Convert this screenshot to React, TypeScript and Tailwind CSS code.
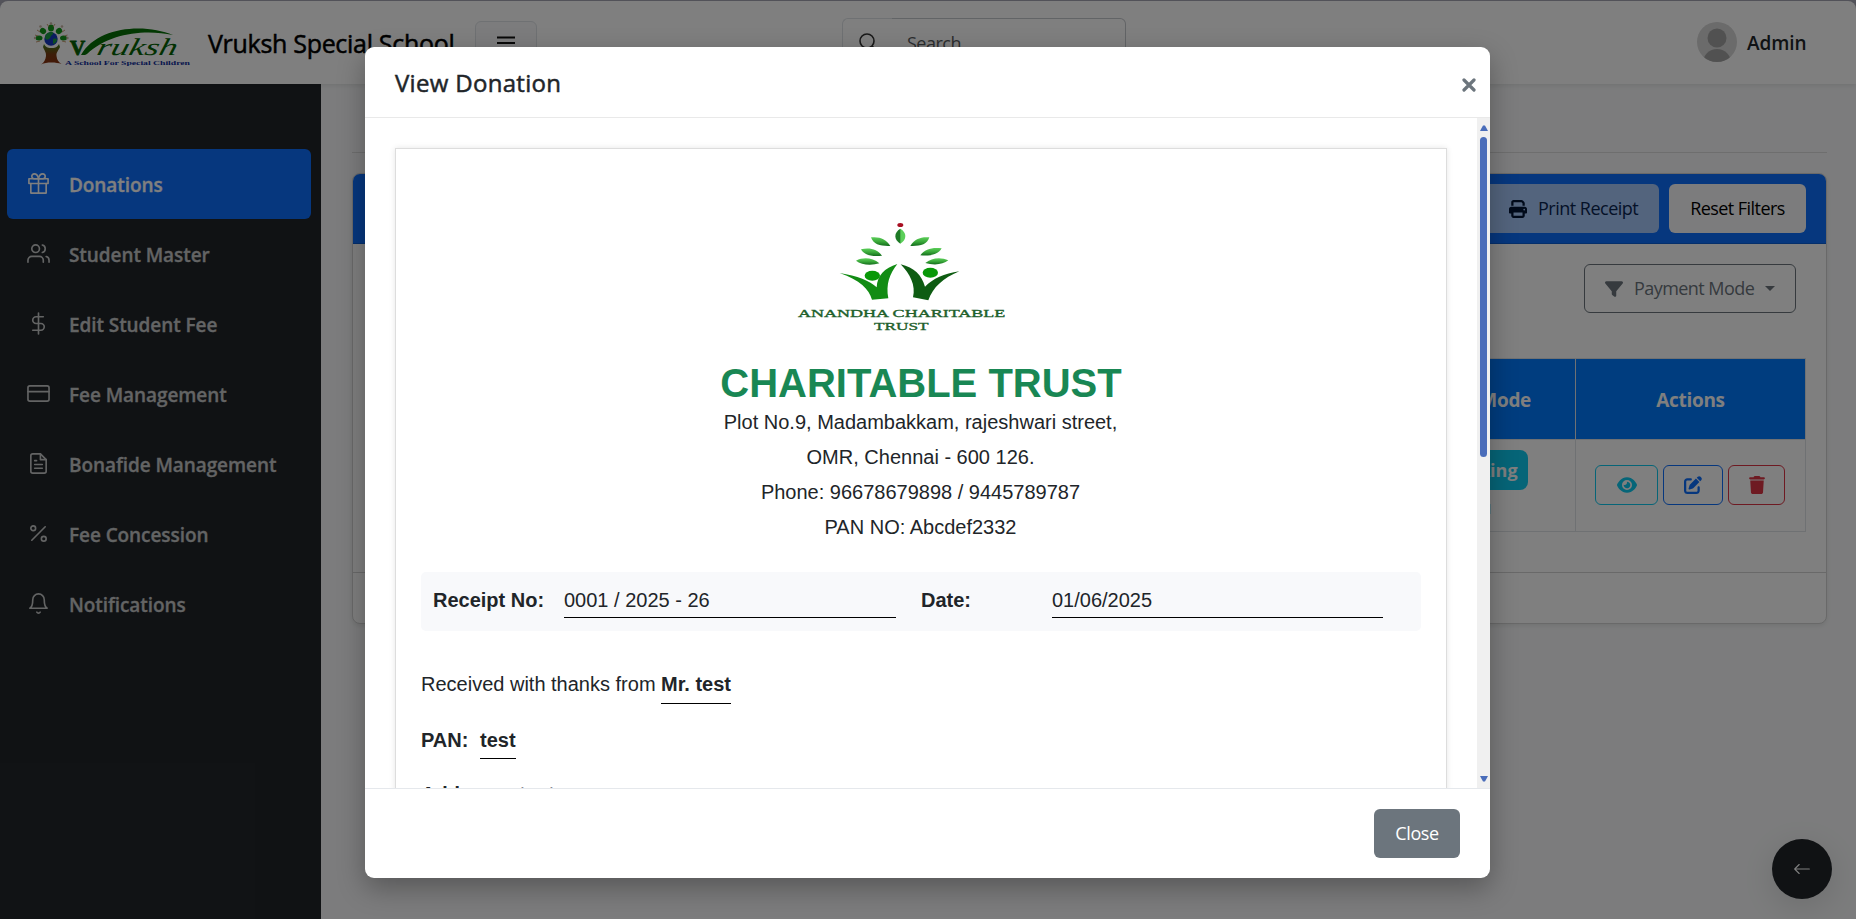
import React from "react";
import { FiGift, FiUsers, FiDollarSign, FiCreditCard, FiFileText, FiPercent, FiBell } from "react-icons/fi";
import { FaPrint, FaEye, FaPenToSquare, FaTrash, FaFilter } from "react-icons/fa6";
import { BsArrowLeft } from "react-icons/bs";

const navItems = [
  { label: "Donations", Icon: FiGift },
  { label: "Student Master", Icon: FiUsers },
  { label: "Edit Student Fee", Icon: FiDollarSign },
  { label: "Fee Management", Icon: FiCreditCard },
  { label: "Bonafide Management", Icon: FiFileText },
  { label: "Fee Concession", Icon: FiPercent },
  { label: "Notifications", Icon: FiBell },
];

function SchoolLogo() {
  return (
    <svg width="160" height="50" viewBox="0 0 160 50" className="shrink-0">
      <defs>
        <linearGradient id="trunk" x1="0" y1="0" x2="0" y2="1">
          <stop offset="0" stopColor="#3f7d1c" />
          <stop offset="0.5" stopColor="#7a3c12" />
          <stop offset="1" stopColor="#8a2f10" />
        </linearGradient>
      </defs>
      <path d="M11 24c2 4 5 4 7.500 4s5.500 0 7.500-4l1 3c-1 3-4 5-3.500 9 .5 4 2 6 5 8-3-1-6-1.500-10-1.500S11 43 8 44.500c3-2 4.500-4.500 5-8.500.4-4-2-6-3-9z" fill="url(#trunk)" />
      <g fill="#12961a">
        <ellipse cx="18" cy="8" rx="3" ry="3.600" />
        <ellipse cx="10" cy="11" rx="3.300" ry="2.800" transform="rotate(40 10 11)" />
        <ellipse cx="26" cy="11" rx="3.300" ry="2.800" transform="rotate(-40 26 11)" />
        <ellipse cx="6" cy="18" rx="3.500" ry="2.500" />
        <ellipse cx="30.500" cy="18" rx="3.500" ry="2.500" />
      </g>
      <g stroke="#b98150" strokeWidth="0.8" fill="none">
        <path d="m14 4 2 3M22 4l-2 3M4 10l3 2M32 10l-3 2M2 15l3 1M34.500 15l-3 1M3 22l4-1M33 22l-4-1" />
      </g>
      <g fill="#c9b6a5">
        <circle cx="18" cy="3.500" r="1.300" />
        <circle cx="7.500" cy="6.500" r="1.300" />
        <circle cx="29" cy="6.500" r="1.300" />
        <circle cx="2" cy="18" r="1.200" />
        <circle cx="34.500" cy="18" r="1.200" />
      </g>
      <circle cx="18" cy="19" r="6.700" fill="#1438c0" />
      <path d="M12 18c0-4 3-6 6-6s3 2 1 3-1 3-3 4-3 1-4-1zM20 19c3-1 4 0 4 1s-2 4-4 4z" fill="#1a9a45" />
      <path d="M48 35C64 6 112 3 140 15 112 9 76 13 54 34l-2 1z" fill="#067006" />
      <text x="37" y="35" fontFamily="Liberation Serif, serif" fontWeight="700" fontSize="21" fill="#056305" stroke="#056305" strokeWidth="0.8">V</text>
      <text x="63" y="35" textLength="80" lengthAdjust="spacingAndGlyphs" transform="translate(8.500 0) skewX(-14)" fontFamily="Liberation Serif, serif" fontStyle="italic" fontSize="24" fill="#056305">ruksh</text>
      <text x="32" y="45" textLength="125" lengthAdjust="spacingAndGlyphs" fontFamily="Liberation Serif, serif" fontWeight="700" fontSize="6.500" fill="#12309c">A School For Special Children</text>
    </svg>
  );
}

function TrustLogo() {
  return (
    <svg width="240" height="140" viewBox="0 0 720 420" className="mr-[42px]">
      <defs>
        <linearGradient id="leaf" x1="0" y1="0" x2="0" y2="1">
          <stop offset="0" stopColor="#5ccf5a" />
          <stop offset="0.5" stopColor="#3aa83a" />
          <stop offset="1" stopColor="#136b1c" />
        </linearGradient>
        <linearGradient id="bud" x1="0" y1="0" x2="1" y2="0">
          <stop offset="0.45" stopColor="#1d7a26" />
          <stop offset="0.55" stopColor="#5ccf5a" />
        </linearGradient>
      </defs>
      <ellipse cx="361" cy="75" rx="9" ry="6" fill="#a80f22" />
      <path d="M361 86c-20 12-20 32 0 45 20-13 20-33 0-45z" fill="url(#bud)" />
      <g fill="url(#leaf)">
        <path d="M273 112c26-3 46 5 58 26-28 1-51-4-58-26z" />
        <path d="M448 112c-26-2-45 5-57 26 28 1 51-4 57-26z" />
        <path d="M243 148c26-7 49 0 63 19-27 4-54-1-63-19z" />
        <path d="M485 145c-27-4-51 2-64 21 28 3 55-2 64-21z" />
        <path d="M228 182c24-12 50-8 70 8-22 7-54 6-70-8z" />
        <path d="M505 181c-22-10-50-8-69 8 23 7 53 6 69-8z" />
      </g>
      <ellipse cx="277" cy="227" rx="23" ry="15" fill="#089808" />
      <ellipse cx="451" cy="218" rx="23" ry="15" fill="#089808" />
      <path d="M179 219c53 9 91 23 111 43 2-36 23-57 62-70-23 29-35 61-27 103l-49 4c-9-32-36-58-97-80z" fill="#128c14" />
      <path d="M362 193c41 10 63 32 73 67 24-24 57-39 103-46-49 20-79 48-93 87l-46-9c9-36-9-70-37-99z" fill="#0e5c12" />
      <text x="54" y="350" textLength="622" lengthAdjust="spacingAndGlyphs" fontFamily="Liberation Serif, serif" fontSize="34" fill="#21602b" stroke="#21602b" strokeWidth="1">ANANDHA CHARITABLE</text>
      <text x="282" y="391" textLength="164" lengthAdjust="spacingAndGlyphs" fontFamily="Liberation Serif, serif" fontSize="34" fill="#21602b" stroke="#21602b" strokeWidth="1">TRUST</text>
    </svg>
  );
}

function TopBar() {
  return (
    <header className="relative z-10 mt-px flex h-[83px] shrink-0 items-start rounded-t-lg bg-white shadow-[0_2px_4px_rgba(0,0,0,0.08)]">
      <div className="ml-[33px] mt-[19px]">
        <SchoolLogo />
      </div>
      <div className="ml-[15px] mt-[24px] w-[267px] text-[25px] leading-[36px] tracking-[-0.3px] whitespace-nowrap text-black [-webkit-text-stroke:0.5px_#000]">
        Vruksh Special School
      </div>
      <button className="mt-5 flex h-[46px] w-[62px] justify-center rounded-md border border-[#dee2e6] bg-[#f8f9fa] pt-[14px]">
        <svg width="18" height="14" viewBox="0 0 18 14">
          <path d="M0 1.500h18M0 7h18M0 12.500h18" stroke="#111" strokeWidth="2" />
        </svg>
      </button>
      <div className="ml-[305px] mt-[17px] flex h-[49px] w-[284px]">
        <div className="flex w-[50px] items-center rounded-l-md border border-r-0 border-[#dee2e6] pl-4">
          <svg width="20" height="20" viewBox="0 0 20 20" fill="none" stroke="#333" strokeWidth="1.600">
            <circle cx="8" cy="8" r="7" />
            <path d="m13 13 6 6" />
          </svg>
        </div>
        <div className="flex flex-1 items-center rounded-r-md border border-l-0 border-[#c5c8cc] pt-px pl-[15px] text-[18px] tracking-[-0.5px] text-[#595c5f]">Search</div>
      </div>
      <div className="mt-[21px] ml-auto mr-[50px] flex h-10 items-center">
        <svg width="40" height="40" viewBox="0 0 40 40">
          <defs>
            <clipPath id="avatar">
              <circle cx="20" cy="20" r="20" />
            </clipPath>
          </defs>
          <g clipPath="url(#avatar)">
            <rect width="40" height="40" fill="#d6d6d6" />
            <circle cx="20" cy="16" r="9.500" fill="#a3a3a3" />
            <circle cx="20" cy="41" r="14" fill="#a3a3a3" />
          </g>
        </svg>
        <span className="ml-[10px] w-[59px] pt-[2px] text-[19px] font-semibold tracking-[-0.1px] whitespace-nowrap text-[#212529]">Admin</span>
      </div>
    </header>
  );
}

function Sidebar() {
  return (
    <nav className="w-[321px] shrink-0 bg-[#212529] pt-[65px] pl-[7px]">
      {navItems.map(({ label, Icon }, i) => (
        <a
          key={label}
          className={
            i === 0
              ? "flex h-[70px] w-[304px] items-center rounded-md bg-[#0d6efd] pl-5 text-white"
              : "flex h-[70px] w-[304px] items-center rounded-md pl-5 text-[#c7c8c9]"
          }
        >
          <Icon size={23} strokeWidth={1.7} className="mb-[2px]" />
          <span className="ml-[19px] pt-[2px] text-[19px] font-semibold tracking-[-0.08px] whitespace-nowrap [-webkit-text-stroke:0.3px_currentColor]">{label}</span>
        </a>
      ))}
    </nav>
  );
}

function Content() {
  return (
    <main className="flex-1 bg-[#f8f9fa] pl-[31px] pr-[29px]">
      <div className="h-[69px] border-b border-[#dcdcdc]" />
      <section className="mt-5 flex h-[451px] w-[1475px] flex-col overflow-hidden rounded-lg border border-[#d2d2d2] bg-white shadow-[0_2px_4px_rgba(0,0,0,0.08)]">
        <div className="flex h-[70px] shrink-0 items-center justify-end gap-[10px] border-b border-[#0b5ed7] bg-[#0d6efd] pr-5">
          <button className="flex h-[49px] w-[180px] items-center rounded-md bg-[#a6c8fb] pl-[30px] text-[#0a2550]">
            <FaPrint size={18} className="text-[#001434]" />
            <span className="ml-[11px] text-[18px] tracking-[-0.5px] whitespace-nowrap">Print Receipt</span>
          </button>
          <button className="flex h-[49px] w-[137px] items-center justify-center rounded-md bg-[#f8f9fa] text-[18px] tracking-[-0.55px] whitespace-nowrap text-black">Reset Filters</button>
        </div>
        <div className="flex h-[329px] shrink-0 flex-col border-b border-[#d2d2d2]">
          <button className="mt-5 mr-[30px] flex h-[49px] w-[212px] items-center self-end rounded-md border border-[#6c757d] pl-5 text-[#6c757d]">
            <FaFilter size={18} />
            <span className="ml-[11px] w-[119px] text-[18px] tracking-[-0.55px] whitespace-nowrap">Payment Mode</span>
            <span className="ml-[12px] border-x-[5px] border-t-[5px] border-x-transparent border-t-[#6c757d]" />
          </button>
          <div className="mt-[45px] mr-5 grid h-[174px] w-[451px] grid-cols-[1fr_229px] grid-rows-[81px_92px] self-end border border-l-0 border-[#dee2e6]">
            <div className="flex items-center justify-center border-r border-b border-[#dee2e6] bg-[#007bff] pt-[2px] pr-[7px] text-[19px] font-bold tracking-[-0.3px] text-white">Payment Mode</div>
            <div className="flex items-center justify-center border-b border-[#dee2e6] bg-[#007bff] pt-[2px] text-[19px] font-bold tracking-[-0.3px] text-white">Actions</div>
            <div className="flex flex-col items-center border-r border-[#dee2e6] pt-[10px]">
              <span className="mr-[6px] flex h-10 items-center rounded-lg bg-[#0dcaf0] px-[10px] pt-px text-[18px] font-bold text-white">Net Banking</span>
              <span className="mt-2 mr-[3px] text-[14px] text-[#0d6efd]">Ref No: 1</span>
            </div>
            <div className="flex items-start gap-[5px] pt-[25px] pl-[19px]">
              <button className="flex h-10 w-[63px] items-center justify-center rounded-md border border-[#0dcaf0] text-[#0dcaf0]"><FaEye size={20} /></button>
              <button className="flex h-10 w-[60px] items-center justify-center rounded-md border border-[#0d6efd] text-[#0d6efd]"><FaPenToSquare size={18} /></button>
              <button className="flex h-10 w-[57px] items-center justify-center rounded-md border border-[#dc3545] text-[#dc3545]"><FaTrash size={18} /></button>
            </div>
          </div>
        </div>
      </section>
    </main>
  );
}

function Receipt() {
  return (
    <div className="flex h-[900px] flex-col border border-[#ddd] bg-white px-[25px] pt-[51px] text-[20px] text-[#212529] shadow-[0_0_6px_rgba(0,0,0,0.1)] [font-family:'Liberation_Sans',Arial,sans-serif]">
      <div className="flex flex-col items-center">
        <TrustLogo />
        <h1 className="mt-[21px] text-[40px] leading-[45px] font-bold whitespace-nowrap text-[#198754]">CHARITABLE TRUST</h1>
        <div className="-mt-px mr-px flex flex-col items-center">
          <p className="leading-[35px]">Plot No.9, Madambakkam, rajeshwari street,</p>
          <p className="leading-[35px]">OMR, Chennai - 600 126.</p>
          <p className="leading-[35px]">Phone: 96678679898 / 9445789787</p>
          <p className="leading-[35px]">PAN NO: Abcdef2332</p>
        </div>
      </div>
      <div className="mt-[27px] flex h-[59px] shrink-0 rounded-[5px] bg-[#f8f9fb] pt-[11px] pl-3">
        <span className="w-[131px] leading-[35px] font-bold">Receipt No:</span>
        <span className="h-[35px] w-[332px] border-b border-black leading-[35px]">0001 / 2025 - 26</span>
        <span className="ml-[25px] w-[131px] leading-[35px] font-bold">Date:</span>
        <span className="h-[35px] w-[331px] border-b border-black leading-[35px]">01/06/2025</span>
      </div>
      <div className="mt-[36px] flex h-[37px] leading-[35px]">
        <span className="w-[240px] whitespace-nowrap">Received with thanks from</span>
        <b className="h-[37px] border-b border-black">Mr. test</b>
      </div>
      <div className="mt-[19px] flex h-[36px] leading-[35px]">
        <b className="w-[59px]">PAN:</b>
        <b className="h-[36px] border-b border-black">test</b>
      </div>
      <div className="mt-[18px] flex h-[36px] leading-[35px]">
        <b className="w-[98px]">Address:</b>
        <b className="h-[36px] border-b border-black">test</b>
      </div>
    </div>
  );
}

function DonationDialog() {
  return (
    <div role="dialog" className="mt-[47px] ml-[365px] flex h-[831px] w-[1125px] flex-col overflow-hidden rounded-[9px] bg-white shadow-[0_10px_28px_rgba(0,0,0,0.3)]">
      <div className="flex h-[71px] shrink-0 items-center justify-between border-b border-[#e9e9e9] pr-[14px] pl-[30px]">
        <h2 className="pt-[2px] text-[24px] tracking-[0.3px] text-[#212529] [-webkit-text-stroke:0.5px_#212529]">View Donation</h2>
        <svg width="14" height="14" viewBox="0 0 14 14" className="mt-[6px]">
          <path d="m2 2 10 10M12 2 2 12" stroke="#6c757d" strokeWidth="3.200" strokeLinecap="round" />
        </svg>
      </div>
      <div className="flex h-[670px] shrink-0 overflow-hidden">
        <div className="w-[1112px] overflow-hidden p-[30px]">
          <Receipt />
        </div>
        <div className="flex w-[13px] flex-col items-center bg-[#f0f0f0] pt-[7px] pb-[6px]">
          <svg width="8" height="6" viewBox="0 0 8 6"><path d="M0 6 3 .5h2L8 6z" fill="#4a6dba" /></svg>
          <div className="mt-[6px] h-[320px] w-[7px] rounded-full bg-[#4a6dba]" />
          <svg width="8" height="6" viewBox="0 0 8 6" className="mt-auto"><path d="M0 0 3 5.500h2L8 0z" fill="#4a6dba" /></svg>
        </div>
      </div>
      <div className="flex flex-1 items-center justify-end border-t border-[#e5e8ec] pr-[30px]">
        <button className="h-[49px] w-[86px] rounded-md bg-[#6c757d] text-[18px] tracking-[-0.4px] text-white">Close</button>
      </div>
    </div>
  );
}

export default function App() {
  return (
    <div className="relative h-[919px] w-[1856px] overflow-hidden [font-family:'Open_Sans','Noto_Sans',sans-serif]">
      <div className="flex h-full flex-col bg-[#a6a6b4]">
        <TopBar />
        <div className="flex min-h-0 flex-1">
          <Sidebar />
          <Content />
        </div>
      </div>
      <button className="absolute top-[839px] left-[1772px] flex size-[60px] items-center justify-center rounded-full bg-[#212529] text-white shadow-[0_8px_32px_rgba(0,0,0,0.12)]">
        <BsArrowLeft size={18} />
      </button>
      <div className="absolute inset-0 z-20 bg-black/50">
        <DonationDialog />
      </div>
    </div>
  );
}
